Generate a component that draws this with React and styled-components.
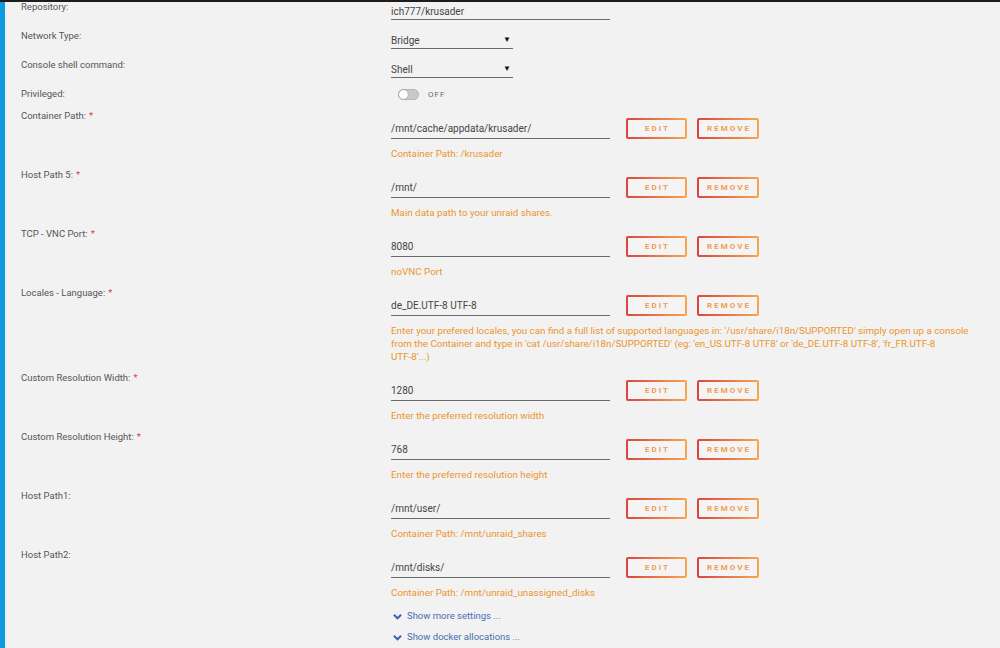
import React from 'react';
import styled, { createGlobalStyle } from 'styled-components';

const GlobalStyle = createGlobalStyle`
  html, body {
    margin: 0;
    padding: 0;
    background: #f2f2f2;
    overflow: hidden;
  }
  body {
    font-family: Roboto, "Liberation Sans", sans-serif;
  }
`;

const Page = styled.div`
  width: 1000px;
  height: 648px;
  display: flex;
  flex-direction: column;
  background: #f2f2f2;
  overflow: hidden;
`;

const TopBar = styled.div`
  height: 2px;
  flex-shrink: 0;
  background: #1d1d1d;
`;

const Body = styled.div`
  flex: 1;
  display: flex;
`;

const SideStrip = styled.div`
  width: 5px;
  flex-shrink: 0;
  background: #0a9be0;
`;

const Form = styled.div`
  flex: 1;
  padding-left: 16px;
  margin-top: -2px;
  display: flex;
  flex-direction: column;
`;

const Row = styled.div`
  display: grid;
  grid-template-columns: 370px 1fr;
  margin-bottom: ${p => p.$gap || 0}px;
`;

const Label = styled.div`
  font-size: 9.5px;
  line-height: 14px;
  color: #555;
  white-space: nowrap;
`;

const Required = styled.span`
  color: #e0413b;
  margin-left: 3px;
`;

const Field = styled.div`
  display: flex;
  flex-direction: column;
  padding-top: ${p => p.$top || 0}px;
`;

const InputLine = styled.div`
  width: ${p => p.$width || 219}px;
  height: ${p => p.$height || 17}px;
  box-sizing: border-box;
  border-bottom: 1px solid #6a6a6a;
  display: flex;
  align-items: center;
  justify-content: space-between;
  font-size: 10px;
  color: #454545;
  padding-right: 2px;
  white-space: nowrap;
`;

const Caret = styled.span`
  font-size: 8px;
  color: #111;
  line-height: 1;
`;

const ToggleWrap = styled.div`
  display: flex;
  align-items: center;
  gap: 9px;
  padding: 2px 0 0 7px;
`;

const Track = styled.div`
  width: 19px;
  height: 9px;
  border-radius: 5px;
  background: #c9c9c9;
  border: 1px solid #b8b8b8;
  display: flex;
  align-items: center;
`;

const Knob = styled.div`
  width: 9px;
  height: 9px;
  border-radius: 50%;
  background: #fff;
  box-shadow: 0 0 1px rgba(0, 0, 0, 0.5);
`;

const ToggleText = styled.span`
  font-size: 8px;
  letter-spacing: 1px;
  color: #6a6a6a;
`;

const Controls = styled.div`
  display: flex;
  align-items: flex-start;
`;

const Buttons = styled.div`
  display: flex;
  gap: 10px;
  margin-left: 16px;
`;

const GradButton = styled.div`
  width: ${p => p.$width}px;
  height: 21px;
  box-sizing: border-box;
  border: 2px solid transparent;
  border-radius: 2px;
  background:
    linear-gradient(#f4f4f4, #f4f4f4) padding-box,
    linear-gradient(90deg, #dc4440, #f7a650) border-box;
  display: flex;
  align-items: center;
  justify-content: center;
  font-size: 8px;
  font-weight: 700;
  letter-spacing: 2px;
  padding-left: 2px;
  color: #f29c52;
  text-transform: uppercase;
`;

const Hint = styled.div`
  margin-top: 8px;
  font-size: 9.8px;
  line-height: 13px;
  color: #ea962e;
  max-width: 590px;
  white-space: pre-line;
`;

const Toggles = styled.div`
  display: grid;
  grid-template-columns: 370px 1fr;
  margin-top: 2px;
`;

const Links = styled.div`
  display: flex;
  flex-direction: column;
  gap: 7px;
`;

const MoreLink = styled.div`
  display: flex;
  align-items: center;
  gap: 5px;
  padding-left: 2px;
  font-size: 9.5px;
  line-height: 14px;
  color: #4a6cb3;
`;

const Chevron = () => (
  <svg width="9" height="7" viewBox="0 0 10 7">
    <path d="M1 1.5 L5 5.5 L9 1.5" fill="none" stroke="#3d63b0" strokeWidth="2.2" />
  </svg>
);

const paths = [
  { label: 'Container Path:', req: true, value: '/mnt/cache/appdata/krusader/', hint: 'Container Path: /krusader' },
  { label: 'Host Path 5:', req: true, value: '/mnt/', hint: 'Main data path to your unraid shares.' },
  { label: 'TCP - VNC Port:', req: true, value: '8080', hint: 'noVNC Port' },
  {
    label: 'Locales - Language:',
    req: true,
    value: 'de_DE.UTF-8 UTF-8',
    hint: "Enter your prefered locales, you can find a full list of supported languages in: '/usr/share/i18n/SUPPORTED' simply open up a console from the Container and type in 'cat /usr/share/i18n/SUPPORTED' (eg: 'en_US.UTF-8 UTF8' or 'de_DE.UTF-8 UTF-8', 'fr_FR.UTF-8\nUTF-8'...)",
  },
  { label: 'Custom Resolution Width:', req: true, value: '1280', hint: 'Enter the preferred resolution width' },
  { label: 'Custom Resolution Height:', req: true, value: '768', hint: 'Enter the preferred resolution height' },
  { label: 'Host Path1:', req: false, value: '/mnt/user/', hint: 'Container Path: /mnt/unraid_shares' },
  { label: 'Host Path2:', req: false, value: '/mnt/disks/', hint: 'Container Path: /mnt/unraid_unassigned_disks' },
];

export default function App() {
  return (
    <Page>
      <GlobalStyle />
      <TopBar />
      <Body>
        <SideStrip />
        <Form>
          <Row $gap={9}>
            <Label>Repository:</Label>
            <Field $top={3}>
              <InputLine>ich777/krusader</InputLine>
            </Field>
          </Row>
          <Row $gap={9}>
            <Label>Network Type:</Label>
            <Field $top={3}>
              <InputLine $width={122}>Bridge<Caret>▼</Caret></InputLine>
            </Field>
          </Row>
          <Row $gap={9}>
            <Label>Console shell command:</Label>
            <Field $top={3}>
              <InputLine $width={122}>Shell<Caret>▼</Caret></InputLine>
            </Field>
          </Row>
          <Row $gap={8}>
            <Label>Privileged:</Label>
            <Field>
              <ToggleWrap>
                <Track><Knob /></Track>
                <ToggleText>OFF</ToggleText>
              </ToggleWrap>
            </Field>
          </Row>
          {paths.map((p, i) => (
            <Row key={i} $gap={8}>
              <Label>
                {p.label}
                {p.req && <Required>*</Required>}
              </Label>
              <Field $top={9}>
                <Controls>
                  <InputLine $height={21}>{p.value}</InputLine>
                  <Buttons>
                    <GradButton $width={61}>Edit</GradButton>
                    <GradButton $width={62}>Remove</GradButton>
                  </Buttons>
                </Controls>
                <Hint>{p.hint}</Hint>
              </Field>
            </Row>
          ))}
          <Toggles>
            <div />
            <Links>
              <MoreLink><Chevron />Show more settings ...</MoreLink>
              <MoreLink><Chevron />Show docker allocations ...</MoreLink>
            </Links>
          </Toggles>
        </Form>
      </Body>
    </Page>
  );
}
